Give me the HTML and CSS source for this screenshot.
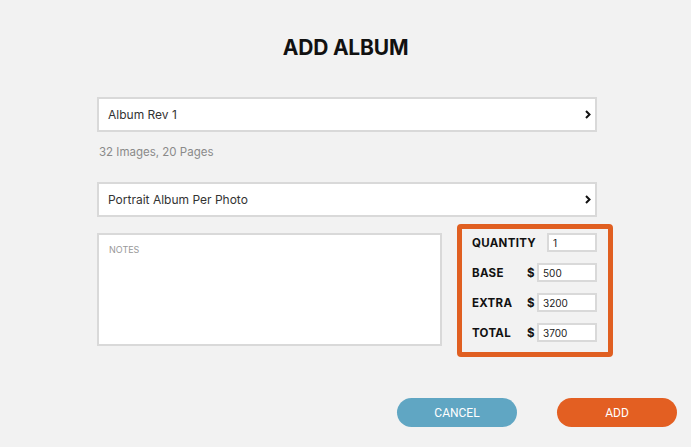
FILE: index.html
```html
<!DOCTYPE html>
<html lang="en">
<head>
  <meta charset="UTF-8">
  <title>Add Album</title>
  <link rel="stylesheet" href="styles.css">
</head>
<body>

  <div id="dialog">
    <h1 class="title">ADD ALBUM</h1>

    <div class="form">
      <!-- アルバム選択 -->
      <div class="select">
        <span>Album Rev 1</span>
        <svg class="chevron" width="6" height="9" viewBox="0 0 6 9"><polyline points="1,1 4.5,4.5 1,8" fill="none" stroke="#111" stroke-width="2"/></svg>
      </div>
      <div class="meta">32 Images, 20 Pages</div>

      <!-- 価格設定 -->
      <div class="select">
        <span>Portrait Album Per Photo</span>
        <svg class="chevron" width="6" height="9" viewBox="0 0 6 9"><polyline points="1,1 4.5,4.5 1,8" fill="none" stroke="#111" stroke-width="2"/></svg>
      </div>

      <div class="lower">
        <div class="notes">NOTES</div>

        <div class="pricing">
          <div class="row">
            <span class="label">QUANTITY</span>
            <input class="field" type="text" value="1">
          </div>
          <div class="row">
            <span class="label">BASE</span>
            <span class="dollar">$</span>
            <input class="field" type="text" value="500">
          </div>
          <div class="row">
            <span class="label">EXTRA</span>
            <span class="dollar">$</span>
            <input class="field" type="text" value="3200">
          </div>
          <div class="row">
            <span class="label">TOTAL</span>
            <span class="dollar">$</span>
            <input class="field" type="text" value="3700">
          </div>
        </div>
      </div>

      <div class="buttons">
        <button class="btn cancel">CANCEL</button>
        <button class="btn add">ADD</button>
      </div>
    </div>
  </div>

</body>
</html>
```

FILE: styles.css
```css
body {
  margin: 0;
  background-color: #f2f2f2;
  font-family: Inter, "Liberation Sans", sans-serif;
  color: #333333;
}

#dialog {
  width: 691px;
  height: 447px;
  padding-top: 36px;
  box-sizing: border-box;
}

.title {
  margin: 0;
  font-size: 21px;
  font-weight: 700;
  text-align: center;
  color: #111111;
  letter-spacing: -0.2px;
  line-height: 24px;
}

.form {
  margin-top: 37px;
  margin-left: 97px;
  width: 516px;
}

.select {
  width: 500px;
  height: 35px;
  box-sizing: border-box;
  border: 2px solid #d9d9d9;
  background: #ffffff;
  display: flex;
  align-items: center;
  justify-content: space-between;
  padding: 0 4px 0 9px;
  font-size: 12px;
  color: #333333;
}

.chevron {
  display: block;
}

.meta {
  font-size: 11.5px;
  color: #8a8a8a;
  padding-left: 2px;
  margin-top: 13px;
  margin-bottom: 23px;
  line-height: 14px;
}

.lower {
  display: flex;
  align-items: flex-start;
  margin-top: 7px;
  gap: 15px;
}

.notes {
  margin-top: 9px;
  width: 345px;
  height: 113px;
  box-sizing: border-box;
  border: 2px solid #d9d9d9;
  background: #ffffff;
  padding: 9px 10px;
  font-size: 9px;
  color: #999999;
  line-height: 12px;
}

.pricing {
  width: 156px;
  height: 133px;
  box-sizing: border-box;
  border: 5px solid #e05f21;
  border-radius: 4px;
  padding: 4px 11px 0 10px;
  display: flex;
  flex-direction: column;
  gap: 11px;
}

.row {
  display: flex;
  align-items: center;
  height: 19px;
}

.label {
  font-size: 11.5px;
  font-weight: 700;
  color: #111111;
  letter-spacing: 0.3px;
  width: 55px;
}

.dollar {
  font-size: 11.5px;
  font-weight: 700;
  color: #111111;
  width: 10px;
}

.field {
  margin-left: auto;
  width: 60px;
  height: 19px;
  box-sizing: border-box;
  border: 2px solid #d9d9d9;
  background: #ffffff;
  font-family: Inter, "Liberation Sans", sans-serif;
  font-size: 10px;
  color: #222222;
  padding: 0 4px;
  outline: none;
}

.row:first-child .field {
  width: 50px;
}

.buttons {
  display: flex;
  gap: 40px;
  margin-top: 41px;
  margin-left: 300px;
  width: 280px;
}

.btn {
  flex-shrink: 0;
  width: 120px;
  height: 29px;
  border: none;
  border-radius: 15px;
  font-family: Roboto, "Liberation Sans", sans-serif;
  font-size: 12px;
  color: #ffffff;
  cursor: pointer;
}

.cancel {
  background-color: #60a6c3;
}

.add {
  background-color: #e35f22;
}
```
